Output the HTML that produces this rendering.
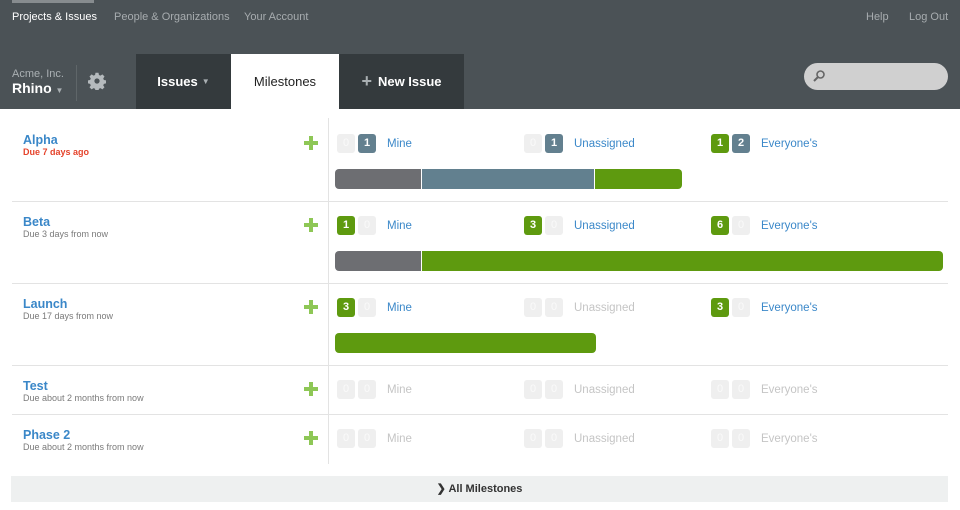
<!DOCTYPE html>
<html><head><meta charset="utf-8"><style>
*{margin:0;padding:0;box-sizing:border-box}
body{width:960px;height:510px;background:#fff;font-family:"Liberation Sans",Arial,sans-serif;position:relative;overflow:hidden}
.a{position:absolute}
.hdr{left:0;top:0;width:960px;height:109px;background:#4b5256}
.nav{font-size:11px;color:#a7acaf;top:11px}
.tab{top:54px;height:55px;font-size:13px;font-weight:bold;display:flex;align-items:center;justify-content:center}
.b{position:absolute;width:18px;height:19px;border-radius:3px;font-size:11px;font-weight:bold;color:#fff;text-align:center;line-height:19px;background:#efefef}
.b.e{color:#fafafa;font-weight:normal}
.g{background:#5e9a0f}
.u{background:#63808f}
.l{position:absolute;font-size:11.5px;color:#3b88c9}
.l.d{color:#c5c5c5}
.t{position:absolute;left:23px;font-size:12.5px;font-weight:bold;color:#3a87c8}
.s{position:absolute;left:23px;font-size:9px;color:#7a7a7a}
.p{position:absolute;left:304px;width:14px;height:14px}
.p:before{content:"";position:absolute;left:5px;top:0;width:4px;height:14px;background:#8ec756}
.p:after{content:"";position:absolute;left:0;top:5px;width:14px;height:4px;background:#8ec756}
.sep{position:absolute;left:12px;width:936px;height:1px;background:#e3e3e3}
.bar{position:absolute;height:20px}
</style></head><body>
<div class="a hdr"></div>
<div class="a" style="left:12px;top:0;width:82px;height:3px;background:#878c8f"></div>
<div class="a nav" style="left:12px;color:#fff">Projects &amp; Issues</div>
<div class="a nav" style="left:114px">People &amp; Organizations</div>
<div class="a nav" style="left:244px">Your Account</div>
<div class="a nav" style="left:866px">Help</div>
<div class="a nav" style="left:909px">Log Out</div>
<div class="a" style="left:12px;top:68px;font-size:11px;color:#aab0b3">Acme, Inc.</div>
<div class="a" style="left:12px;top:80px;font-size:14px;font-weight:bold;color:#fff">Rhino <span style="font-size:8px;color:#aab0b3">▼</span></div>
<div class="a" style="left:76px;top:65px;width:1px;height:36px;background:#5f6669"></div>
<svg class="a" style="left:88px;top:72px" width="18" height="18" viewBox="0 0 24 24"><path fill="#b5babd" d="M10 1h4l.6 3 2 .9 2.6-1.7 2.8 2.8-1.7 2.6.9 2 3 .6v4l-3 .6-.9 2 1.7 2.6-2.8 2.8-2.6-1.7-2 .9-.6 3h-4l-.6-3-2-.9-2.6 1.7-2.8-2.8 1.7-2.6-.9-2-3-.6v-4l3-.6.9-2-1.7-2.6 2.8-2.8 2.6 1.7 2-.9zM12 8.5a3.5 3.5 0 1 0 0 7 3.5 3.5 0 1 0 0-7z"/></svg>
<div class="a tab" style="left:136px;width:95px;background:#343a3d;color:#fff">Issues <span style="font-size:8px;color:#aab0b3;margin-left:4px">▼</span></div>
<div class="a tab" style="left:231px;width:108px;background:#fff;color:#222;font-weight:normal">Milestones</div>
<div class="a tab" style="left:339px;width:125px;background:#343a3d;color:#fff"><span style="font-size:18px;color:#aab0b3;margin-right:6px">+</span>New Issue</div>
<div class="a" style="left:804px;top:63px;width:144px;height:27px;border-radius:14px;background:#d0d0d0"></div>
<svg class="a" style="left:812px;top:69px" width="14" height="14" viewBox="0 0 14 14"><circle cx="8.5" cy="5.5" r="3.5" fill="none" stroke="#666" stroke-width="1.6"/><path d="M6 8 2 12" stroke="#666" stroke-width="2"/></svg>

<div class="a" style="left:328px;top:118px;width:1px;height:346px;background:#e3e3e3"></div>
<div class="sep" style="top:201px"></div>
<div class="sep" style="top:283px"></div>
<div class="sep" style="top:365px"></div>
<div class="sep" style="top:414px"></div>

<div class="t" style="top:133px">Alpha</div>
<div class="s" style="top:147px;color:#e5432b;font-weight:bold">Due 7 days ago</div>
<div class="p" style="top:136px"></div>
<div class="b e" style="left:337px;top:134px">0</div><div class="b u" style="left:358px;top:134px">1</div><div class="l" style="left:387px;top:138px">Mine</div>
<div class="b e" style="left:524px;top:134px">0</div><div class="b u" style="left:545px;top:134px">1</div><div class="l" style="left:574px;top:138px">Unassigned</div>
<div class="b g" style="left:711px;top:134px">1</div><div class="b u" style="left:732px;top:134px">2</div><div class="l" style="left:761px;top:138px">Everyone's</div>
<div class="bar" style="left:335px;top:169px;width:86px;background:#6d6e72;border-radius:4px 0 0 4px"></div>
<div class="bar" style="left:422px;top:169px;width:172px;background:#62808f"></div>
<div class="bar" style="left:595px;top:169px;width:87px;background:#5e9a0f;border-radius:0 4px 4px 0"></div>

<div class="t" style="top:215px">Beta</div>
<div class="s" style="top:229px">Due 3 days from now</div>
<div class="p" style="top:218px"></div>
<div class="b g" style="left:337px;top:216px">1</div><div class="b e" style="left:358px;top:216px">0</div><div class="l" style="left:387px;top:220px">Mine</div>
<div class="b g" style="left:524px;top:216px">3</div><div class="b e" style="left:545px;top:216px">0</div><div class="l" style="left:574px;top:220px">Unassigned</div>
<div class="b g" style="left:711px;top:216px">6</div><div class="b e" style="left:732px;top:216px">0</div><div class="l" style="left:761px;top:220px">Everyone's</div>
<div class="bar" style="left:335px;top:251px;width:86px;background:#6d6e72;border-radius:4px 0 0 4px"></div>
<div class="bar" style="left:422px;top:251px;width:521px;background:#5e9a0f;border-radius:0 4px 4px 0"></div>

<div class="t" style="top:297px">Launch</div>
<div class="s" style="top:311px">Due 17 days from now</div>
<div class="p" style="top:300px"></div>
<div class="b g" style="left:337px;top:298px">3</div><div class="b e" style="left:358px;top:298px">0</div><div class="l" style="left:387px;top:302px">Mine</div>
<div class="b e" style="left:524px;top:298px">0</div><div class="b e" style="left:545px;top:298px">0</div><div class="l d" style="left:574px;top:302px">Unassigned</div>
<div class="b g" style="left:711px;top:298px">3</div><div class="b e" style="left:732px;top:298px">0</div><div class="l" style="left:761px;top:302px">Everyone's</div>
<div class="bar" style="left:335px;top:333px;width:261px;background:#5e9a0f;border-radius:4px"></div>

<div class="t" style="top:379px">Test</div>
<div class="s" style="top:393px">Due about 2 months from now</div>
<div class="p" style="top:382px"></div>
<div class="b e" style="left:337px;top:380px">0</div><div class="b e" style="left:358px;top:380px">0</div><div class="l d" style="left:387px;top:384px">Mine</div>
<div class="b e" style="left:524px;top:380px">0</div><div class="b e" style="left:545px;top:380px">0</div><div class="l d" style="left:574px;top:384px">Unassigned</div>
<div class="b e" style="left:711px;top:380px">0</div><div class="b e" style="left:732px;top:380px">0</div><div class="l d" style="left:761px;top:384px">Everyone's</div>

<div class="t" style="top:428px">Phase 2</div>
<div class="s" style="top:442px">Due about 2 months from now</div>
<div class="p" style="top:431px"></div>
<div class="b e" style="left:337px;top:429px">0</div><div class="b e" style="left:358px;top:429px">0</div><div class="l d" style="left:387px;top:433px">Mine</div>
<div class="b e" style="left:524px;top:429px">0</div><div class="b e" style="left:545px;top:429px">0</div><div class="l d" style="left:574px;top:433px">Unassigned</div>
<div class="b e" style="left:711px;top:429px">0</div><div class="b e" style="left:732px;top:429px">0</div><div class="l d" style="left:761px;top:433px">Everyone's</div>

<div class="a" style="left:11px;top:476px;width:937px;height:26px;background:#eef0f0;font-size:11px;font-weight:bold;color:#333;text-align:center;line-height:26px">&#x276F; All Milestones</div>
</body></html>
